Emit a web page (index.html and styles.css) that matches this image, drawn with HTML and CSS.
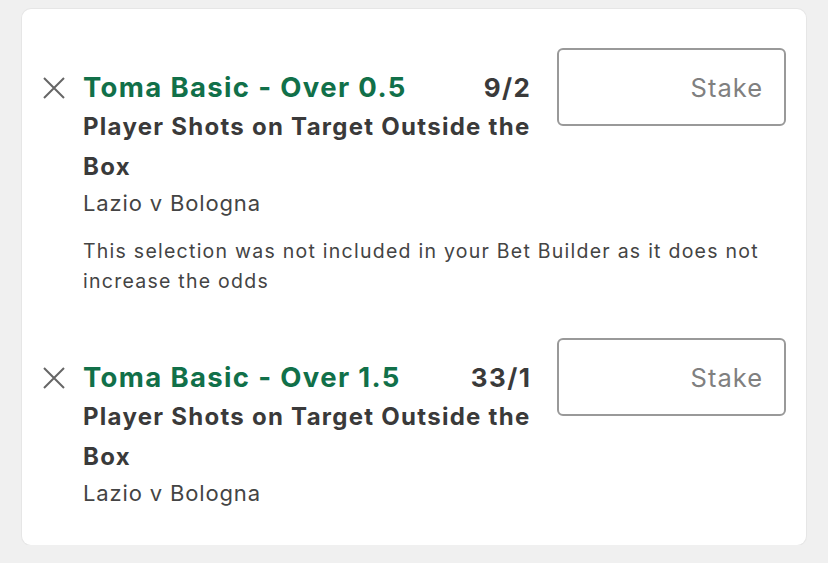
FILE: index.html
```html
<!DOCTYPE html>
<html>
<head>
<meta charset="utf-8">
<link rel="stylesheet" href="styles.css">
</head>
<body>
<div class="card">
  <div class="item">
    <div class="close">
      <svg width="24" height="22" viewBox="0 0 24 22"><path d="M2 1 L22 21 M22 1 L2 21" stroke="#666" stroke-width="2" fill="none"/></svg>
    </div>
    <div class="content">
      <div class="head">
        <span class="title">Toma Basic - Over 0.5</span>
        <span class="odds">9/2</span>
      </div>
      <div class="market">Player Shots on Target Outside the Box</div>
      <div class="event">Lazio v Bologna</div>
      <div class="note">This selection was not included in your Bet Builder as it does not increase the odds</div>
    </div>
    <div class="stake">Stake</div>
  </div>
  <div class="item">
    <div class="close">
      <svg width="24" height="22" viewBox="0 0 24 22"><path d="M2 1 L22 21 M22 1 L2 21" stroke="#666" stroke-width="2" fill="none"/></svg>
    </div>
    <div class="content">
      <div class="head">
        <span class="title">Toma Basic - Over 1.5</span>
        <span class="odds">33/1</span>
      </div>
      <div class="market">Player Shots on Target Outside the Box</div>
      <div class="event">Lazio v Bologna</div>
    </div>
    <div class="stake">Stake</div>
  </div>
</div>
</body>
</html>
```
FILE: styles.css
```css
html, body {
  margin: 0;
  padding: 0;
  background: #f0f0f0;
}
body {
  padding: 9px 22px 0 22px;
  font-family: Inter, "Liberation Sans", sans-serif;
}
.card {
  width: 784px;
  height: 536px;
  box-sizing: border-box;
  background: #fff;
  border-radius: 9px;
  box-shadow: 0 0 0 1px #e6e6e6;
  padding: 39px 20px 0 20px;
}
.item {
  display: flex;
  align-items: flex-start;
  margin-bottom: 42px;
}
.close {
  width: 24px;
  height: 22px;
  margin-top: 29px;
  margin-right: 17px;
  flex: none;
}
.close svg { display: block; }
.content {
  width: 447px;
  padding-top: 19px;
  flex: none;
}
.head {
  display: flex;
  justify-content: space-between;
  align-items: center;
  height: 40px;
}
.title {
  color: #117049;
  font-weight: 700;
  font-size: 27.5px;
  letter-spacing: 1.35px;
}
.odds {
  color: #3a3a3a;
  font-weight: 700;
  font-size: 26px;
  letter-spacing: 1.5px;
  margin-right: -1.5px;
}
.market {
  color: #3a3a3a;
  font-weight: 700;
  font-size: 24px;
  letter-spacing: 1.27px;
  line-height: 40px;
  margin-right: -8px;
}
.event {
  color: #444;
  font-size: 22px;
  letter-spacing: 0.85px;
  line-height: 32px;
}
.note {
  color: #444;
  font-size: 19.5px;
  letter-spacing: 1.25px;
  line-height: 30px;
  width: 700px;
  margin-top: 17px;
}
.stake {
  margin-left: 27px;
  width: 229px;
  height: 78px;
  box-sizing: border-box;
  border: 2px solid #999;
  border-radius: 6px;
  display: flex;
  align-items: center;
  justify-content: flex-end;
  padding-right: 21px;
  color: #808080;
  font-size: 25.5px;
  letter-spacing: 1px;
  flex: none;
}
```
